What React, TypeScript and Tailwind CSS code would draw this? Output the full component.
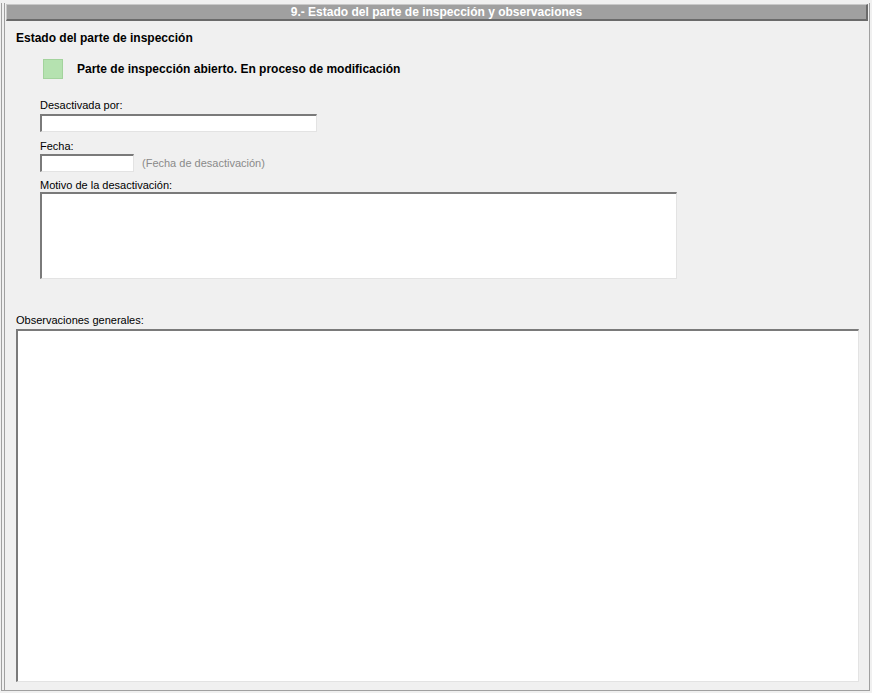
export default function App() {
  return (
    <div className="w-[872px] h-[693px] bg-[#f0f0f0] pt-[3px] pl-px pr-[2px] pb-[2px] font-['Liberation_Sans',Arial,sans-serif] text-black">
      <div className="h-full border-l border-r border-b border-[#a0a0a0] bg-[#f0f0f0] pl-[2px] pr-px">
        <div className="h-full border-l border-[#a0a0a0] flex flex-col">
          {/* header bar */}
          <div className="mt-px ml-px h-[17px] bg-[#a0a0a0] border-t border-l border-[#c8c8c8] border-r-2 border-b-2 border-r-[#6a6a6a] border-b-[#6a6a6a] flex items-center justify-center">
            <span className="text-white text-[12px] font-bold leading-none">
              9.- Estado del parte de inspección y observaciones
            </span>
          </div>

          <div className="pl-[11px] pr-[9px] flex flex-col flex-1">
            <div className="mt-[10px] text-[12px] font-bold leading-[14px]">
              Estado del parte de inspección
            </div>

            <div className="mt-[14px] ml-[27px] flex items-center gap-[14px]">
              <div className="w-[20px] h-[20px] bg-[#b5e2b0] border border-[#a3d39d]" />
              <span className="text-[12px] font-bold">
                Parte de inspección abierto. En proceso de modificación
              </span>
            </div>

            <div className="ml-[24px] mt-[20px] flex flex-col">
              <label className="text-[11px] leading-[13px]">Desactivada por:</label>
              <div className="mt-[2px] w-[277px] h-[18px] bg-white border-t-2 border-l-2 border-t-[#7a7a7a] border-l-[#7a7a7a] border-b border-r border-b-[#e3e3e3] border-r-[#e3e3e3]" />

              <label className="mt-[8px] text-[11px] leading-[13px]">Fecha:</label>
              <div className="mt-[1px] flex items-center gap-[8px]">
                <div className="w-[94px] h-[18px] bg-white border-t-2 border-l-2 border-t-[#7a7a7a] border-l-[#7a7a7a] border-b border-r border-b-[#e3e3e3] border-r-[#e3e3e3]" />
                <span className="text-[11px] text-[#8a8a8a]">(Fecha de desactivación)</span>
              </div>

              <label className="mt-[7px] text-[11px] leading-[13px]">Motivo de la desactivación:</label>
              <div className="mt-0 w-[637px] h-[87px] bg-white border-t-2 border-l-2 border-t-[#7a7a7a] border-l-[#7a7a7a] border-b border-r border-b-[#e3e3e3] border-r-[#e3e3e3]" />
            </div>

            <label className="mt-[35px] text-[11px] leading-[13px]">Observaciones generales:</label>
            <div className="mt-[2px] w-[843px] h-[353px] bg-white border-t-2 border-l-2 border-t-[#7a7a7a] border-l-[#7a7a7a] border-b border-r border-b-[#e3e3e3] border-r-[#e3e3e3]" />
          </div>
        </div>
      </div>
    </div>
  );
}
